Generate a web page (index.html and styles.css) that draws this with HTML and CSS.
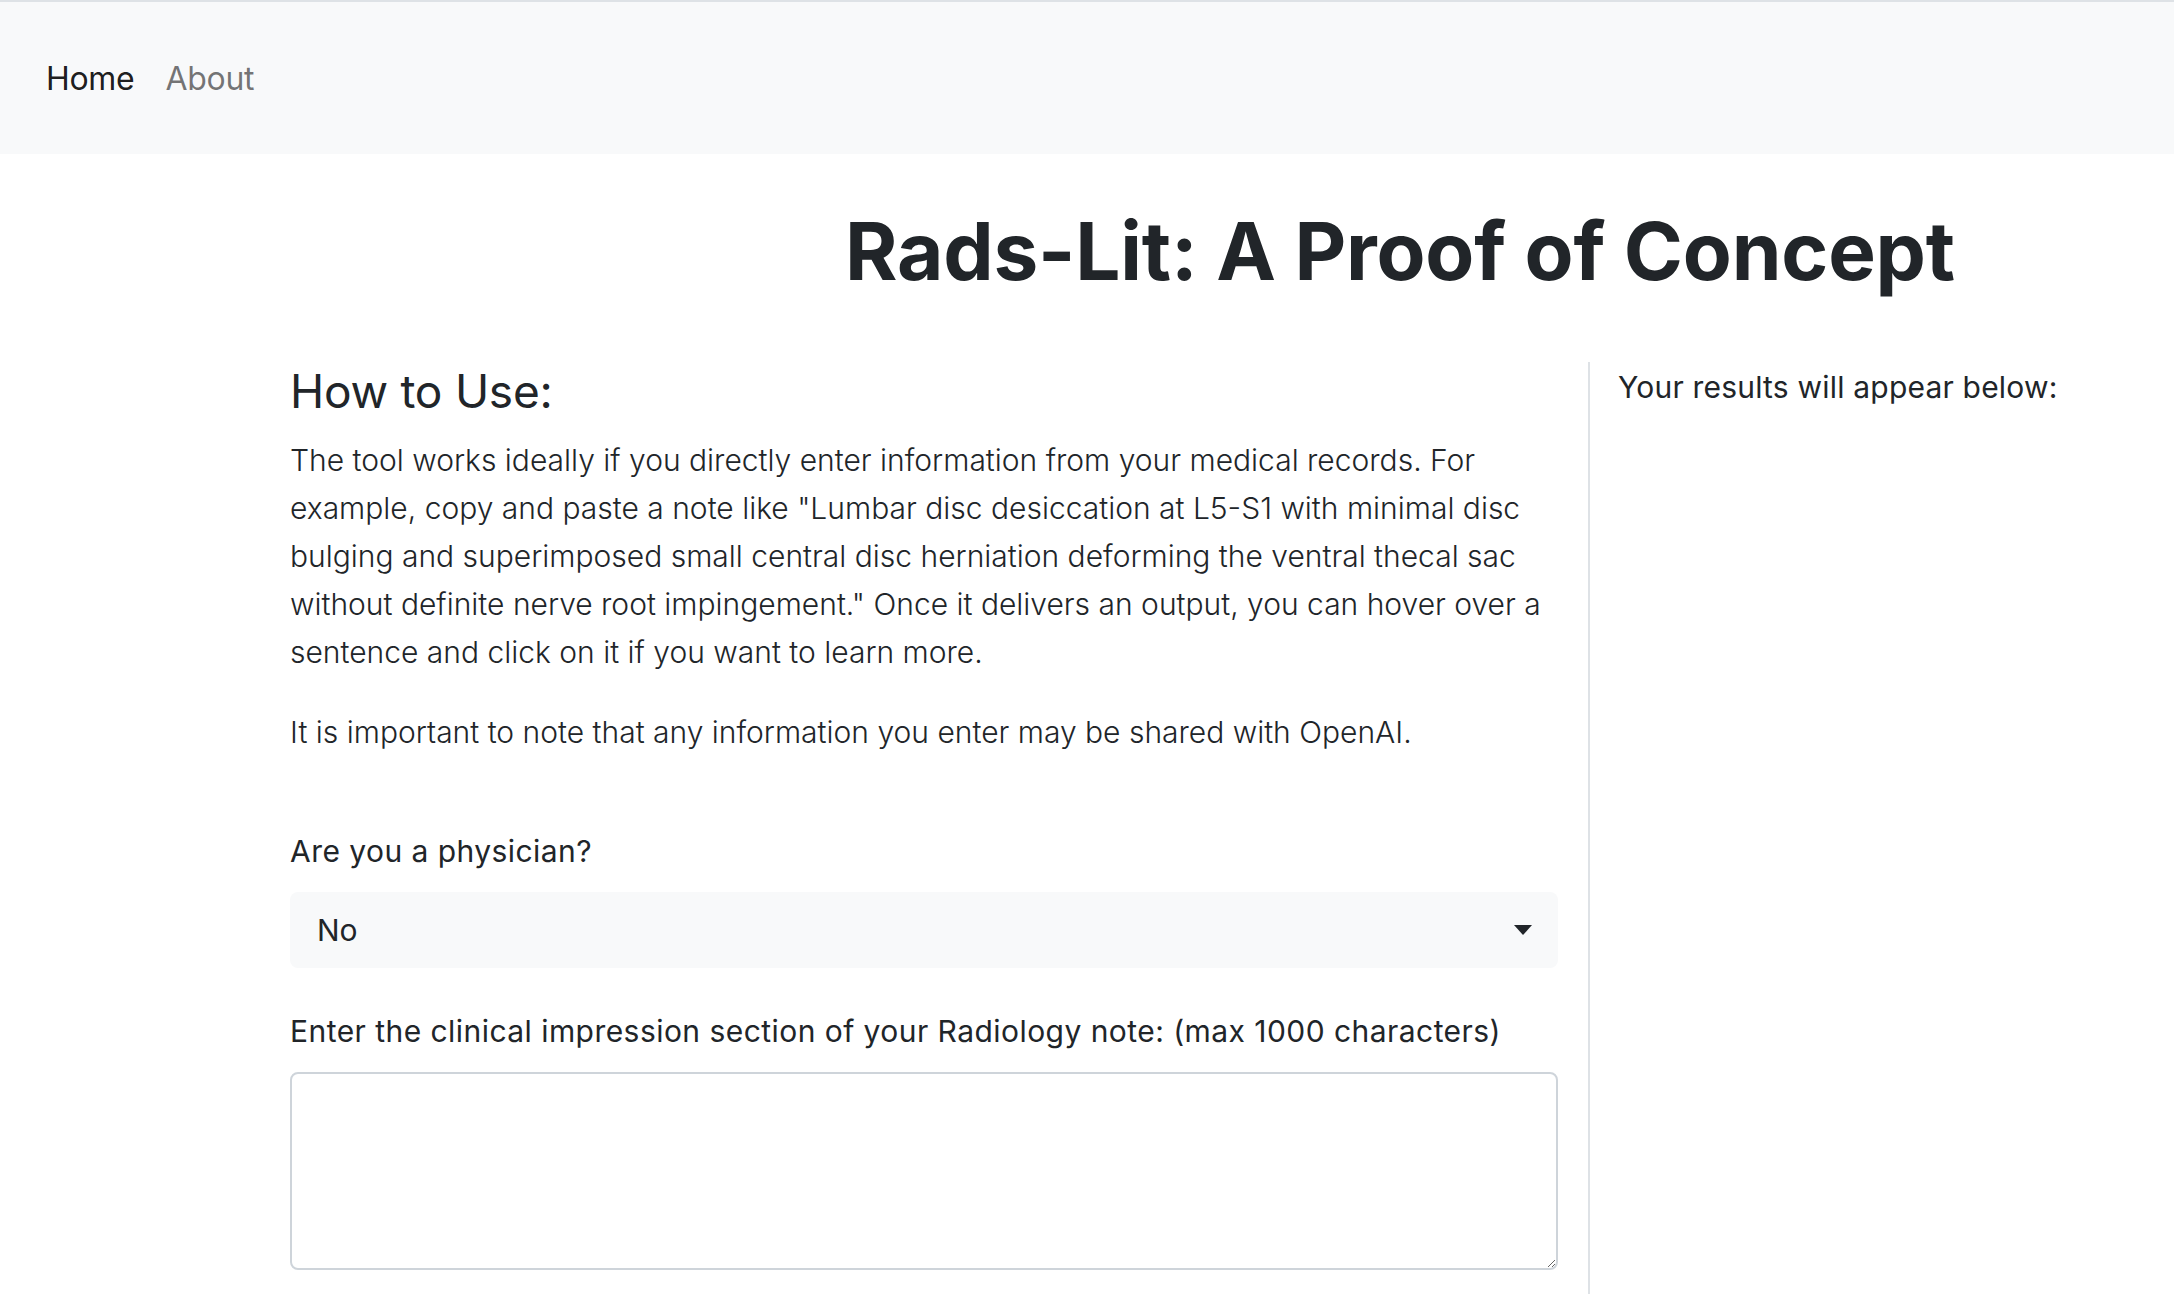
FILE: index.html
```html
<!DOCTYPE html>
<html lang="en">
<head>
<meta charset="utf-8">
<title>Rads-Lit</title>
<link rel="stylesheet" href="styles.css">
</head>
<body>
<nav class="navbar">
  <a class="nav-link active" href="#">Home</a>
  <a class="nav-link" href="#">About</a>
</nav>
<div class="title-wrap">
  <h1 class="title">Rads-Lit: A Proof of Concept</h1>
</div>
<main class="row">
  <section class="col-left">
    <h3 class="section-head">How to Use:</h3>
    <p class="body-text">The tool works ideally if you directly enter information from your medical records. For<br>example, copy and paste a note like "Lumbar disc desiccation at L5-S1 with minimal disc<br>bulging and superimposed small central disc herniation deforming the ventral thecal sac<br>without definite nerve root impingement." Once it delivers an output, you can hover over a<br>sentence and click on it if you want to learn more.</p>
    <p class="body-text">It is important to note that any information you enter may be shared with OpenAI.</p>
    <div class="form-group first">
      <label class="form-label">Are you a physician?</label>
      <div class="select">
        <span class="select-value">No</span>
        <svg class="caret" width="18" height="10" viewBox="0 0 18 10"><path d="M0 0 L18 0 L9 10 Z" fill="#212529"/></svg>
      </div>
    </div>
    <div class="form-group">
      <label class="form-label">Enter the clinical impression section of your Radiology note: (max 1000 characters)</label>
      <textarea class="textarea"></textarea>
    </div>
  </section>
  <aside class="col-right">
    <p class="results-text">Your results will appear below:</p>
  </aside>
</main>
</body>
</html>
```

FILE: styles.css
```css
html, body {
  margin: 0;
  padding: 0;
  background: #ffffff;
  height: 100%;
}
body {
  font-family: Inter, "Noto Sans", "Liberation Sans", sans-serif;
  color: #212529;
  overflow: hidden;
}
.navbar {
  height: 152px;
  border-top: 2px solid #dee2e6;
  background: #f8f9fa;
  display: flex;
  align-items: center;
  padding-left: 46px;
  gap: 31px;
}
.nav-link {
  font-size: 32px;
  font-weight: 400;
  text-decoration: none;
  color: rgba(0, 0, 0, 0.9);
  letter-spacing: -0.3px;
}
.nav-link:not(.active) {
  color: rgba(0, 0, 0, 0.55);
}
.title-wrap {
  margin-left: 626px;
  text-align: center;
}
.title {
  margin: 49px 0 0 0;
  font-size: 80px;
  line-height: 96px;
  font-weight: 700;
  letter-spacing: -0.2px;
}
.row {
  display: flex;
  margin-top: 63px;
  padding-left: 290px;
  height: 940px;
}
.col-left {
  width: 1268px;
  flex: none;
}
.col-right {
  margin-left: 30px;
  border-left: 2px solid #dee2e6;
  padding-left: 28px;
  flex: 1;
}
.section-head {
  margin: 2px 0 17px 0;
  font-size: 46px;
  line-height: 55px;
  font-weight: 400;
  letter-spacing: -0.25px;
}
.body-text {
  margin: 0 0 32px 0;
  font-size: 30px;
  line-height: 48px;
  font-weight: 300;
  letter-spacing: 0px;
}
.form-group {
  display: flex;
  flex-direction: column;
  gap: 17px;
  margin-top: 39px;
}
.form-group.first {
  margin-top: 71px;
}
.form-label {
  font-size: 30px;
  line-height: 48px;
  font-weight: 400;
  letter-spacing: 0.45px;
}
.select {
  height: 76px;
  background: #f8f9fa;
  border-radius: 8px;
  display: flex;
  align-items: center;
  justify-content: space-between;
  padding: 0 26px 0 27px;
}
.select-value {
  font-size: 30px;
  line-height: 48px;
  font-weight: 400;
}
.caret {
  display: block;
}
.textarea {
  display: block;
  box-sizing: border-box;
  width: 100%;
  height: 198px;
  border: 2px solid #ced4da;
  border-radius: 8px;
  background: #ffffff;
  font-family: inherit;
  font-size: 30px;
  resize: vertical;
  margin: 0;
}
.results-text {
  margin: 1px 0 0 0;
  font-size: 30px;
  line-height: 48px;
  font-weight: 400;
  letter-spacing: 0.2px;
}
```
